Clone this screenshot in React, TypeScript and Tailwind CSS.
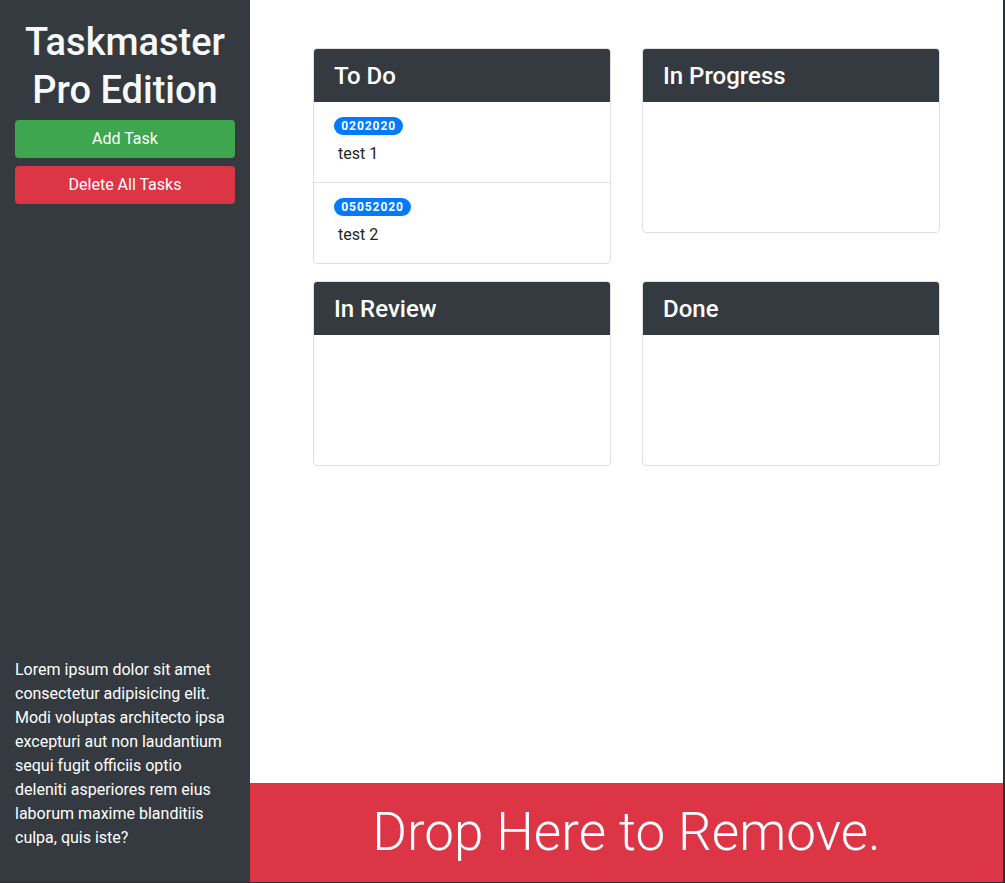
import React from "react";

type Task = { date: string; text: string };

const columns: { title: string; tasks: Task[] }[] = [
  { title: "To Do", tasks: [{ date: "0202020", text: "test 1" }, { date: "05052020", text: "test 2" }] },
  { title: "In Progress", tasks: [] },
  { title: "In Review", tasks: [] },
  { title: "Done", tasks: [] },
];

function Card({ title, tasks }: { title: string; tasks: Task[] }) {
  return (
    <div className="flex flex-col overflow-hidden rounded border border-[#dfdfdf] bg-white">
      <div className="bg-[#343a40] px-5 pb-[11px] pt-[13px]">
        <h4 className="text-[24px] font-medium leading-[1.2] text-white">{title}</h4>
      </div>
      {tasks.length === 0 ? (
        <div className="h-[130px]" />
      ) : (
        <ul>
          {tasks.map((t, i) => (
            <li
              key={t.date}
              className={`px-5 py-3 ${i < tasks.length - 1 ? "border-b border-[#dfdfdf]" : ""}`}
            >
              <div className="flex h-6 items-center">
                <span className="inline-block rounded-full bg-[#007bff] px-[0.6em] py-[0.25em] text-[12px] font-bold leading-none tracking-[0.08em] text-white">
                  {t.date}
                </span>
              </div>
              <p className="m-1 text-[16px] leading-6 text-[#212529]">{t.text}</p>
            </li>
          ))}
        </ul>
      )}
    </div>
  );
}

export default function App() {
  return (
    <div className="flex h-[883px] w-full border-b border-r-2 border-[#2c3035] font-['Roboto',sans-serif]">
      <aside className="flex w-[250px] shrink-0 flex-col bg-[#343a40] px-[15px] pb-4 pt-[18px]">
        <h1 className="mb-[6px] text-center text-[38px] font-medium leading-[48px] text-[#f8f9fa]">
          Taskmaster Pro Edition
        </h1>
        <button className="mb-2 h-[38px] w-full rounded bg-[#3da64f] text-[16px] leading-6 text-white">
          Add Task
        </button>
        <button className="h-[38px] w-full rounded bg-[#dc3545] text-[16px] leading-6 text-white">
          Delete All Tasks
        </button>
        <p className="mb-4 mt-auto text-[16px] leading-6 text-white">
          Lorem ipsum dolor sit amet consectetur adipisicing elit. Modi voluptas architecto ipsa excepturi aut non
          laudantium sequi fugit officiis optio deleniti asperiores rem eius laborum maxime blanditiis culpa, quis
          iste?
        </p>
      </aside>
      <main className="flex min-w-0 flex-1 flex-col">
        <div className="flex-1 bg-white px-[63px] pt-[48px]">
          <div className="grid grid-cols-2 items-start gap-x-[31px] gap-y-[17px]">
            {columns.map((c) => (
              <Card key={c.title} title={c.title} tasks={c.tasks} />
            ))}
          </div>
        </div>
        <div className="flex h-[99px] items-center justify-center bg-[#dc3545] text-[53px] font-light leading-[1.2] text-white">
          Drop Here to Remove.
        </div>
      </main>
    </div>
  );
}
